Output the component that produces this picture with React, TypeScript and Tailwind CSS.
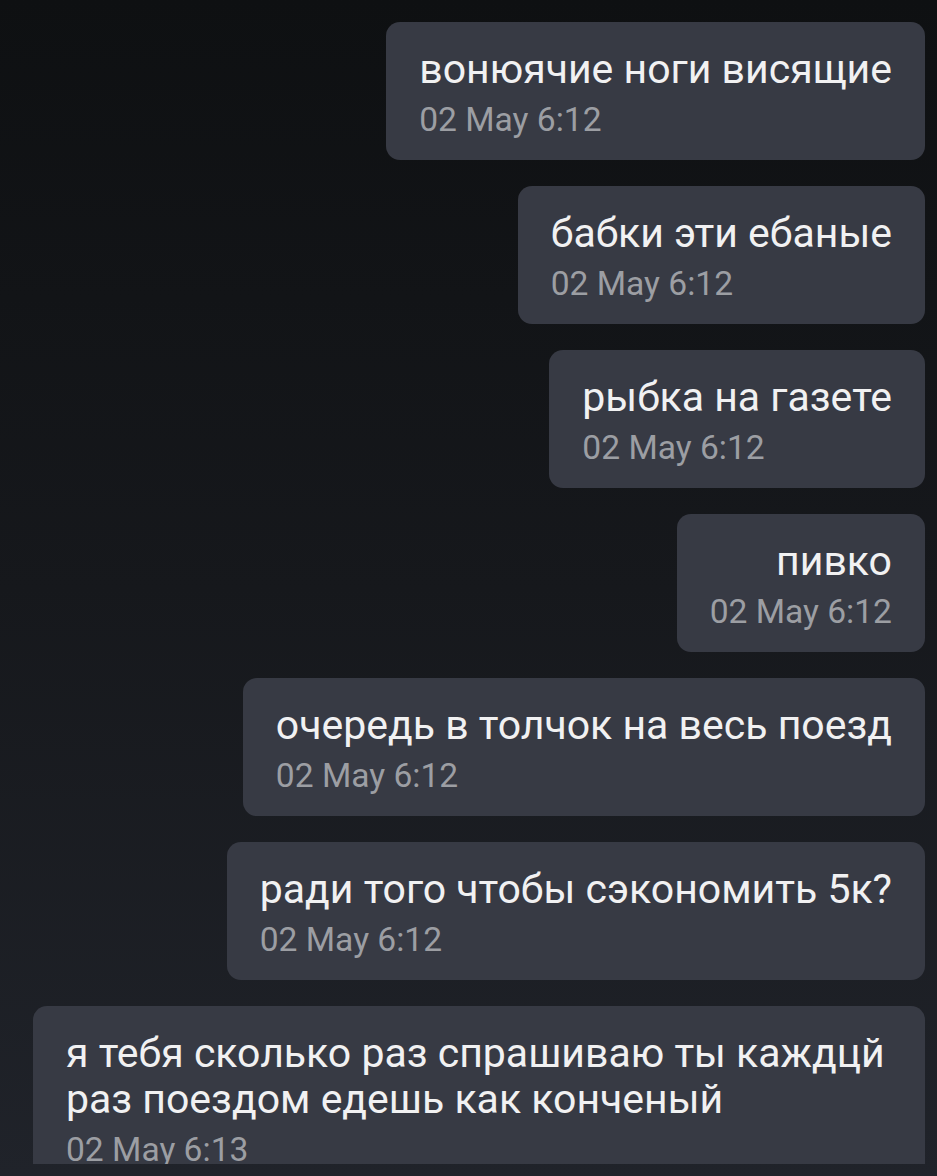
type Message = {
  text: string
  time: string
}

const messages: Message[] = [
  { text: 'вонюячие ноги висящие', time: '02 May 6:12' },
  { text: 'бабки эти ебаные', time: '02 May 6:12' },
  { text: 'рыбка на газете', time: '02 May 6:12' },
  { text: 'пивко', time: '02 May 6:12' },
  { text: 'очередь в толчок на весь поезд', time: '02 May 6:12' },
  { text: 'ради того чтобы сэкономить 5к?', time: '02 May 6:12' },
  { text: 'я тебя сколько раз спрашиваю ты каждцй раз поездом едешь как конченый', time: '02 May 6:13' },
]

function Bubble({ text, time }: Message) {
  return (
    <div className="flex max-w-[892px] shrink-0 flex-col rounded-[14px] bg-[#373a44] px-[33px] pb-[20px] pt-[24px]">
      <div className="self-end text-[41px] leading-[46px] text-[#f1f1f2]">{text}</div>
      <div className="mt-[8px] self-start text-[33.6px] leading-[40px] text-[#9c9ea3]">{time}</div>
    </div>
  )
}

export default function App() {
  return (
    <div
      className="h-[1176px] w-full overflow-hidden bg-linear-to-b from-[#0e1012] via-[#16181c] to-[#20232a]"
      style={{ fontFamily: 'Roboto, "Noto Sans", sans-serif' }}
    >
      <div className="flex h-[1164px] flex-col items-end gap-[26px] overflow-hidden pl-[33px] pr-[12px] pt-[22px]">
        {messages.map((m, i) => (
          <Bubble key={i} text={m.text} time={m.time} />
        ))}
      </div>
    </div>
  )
}
